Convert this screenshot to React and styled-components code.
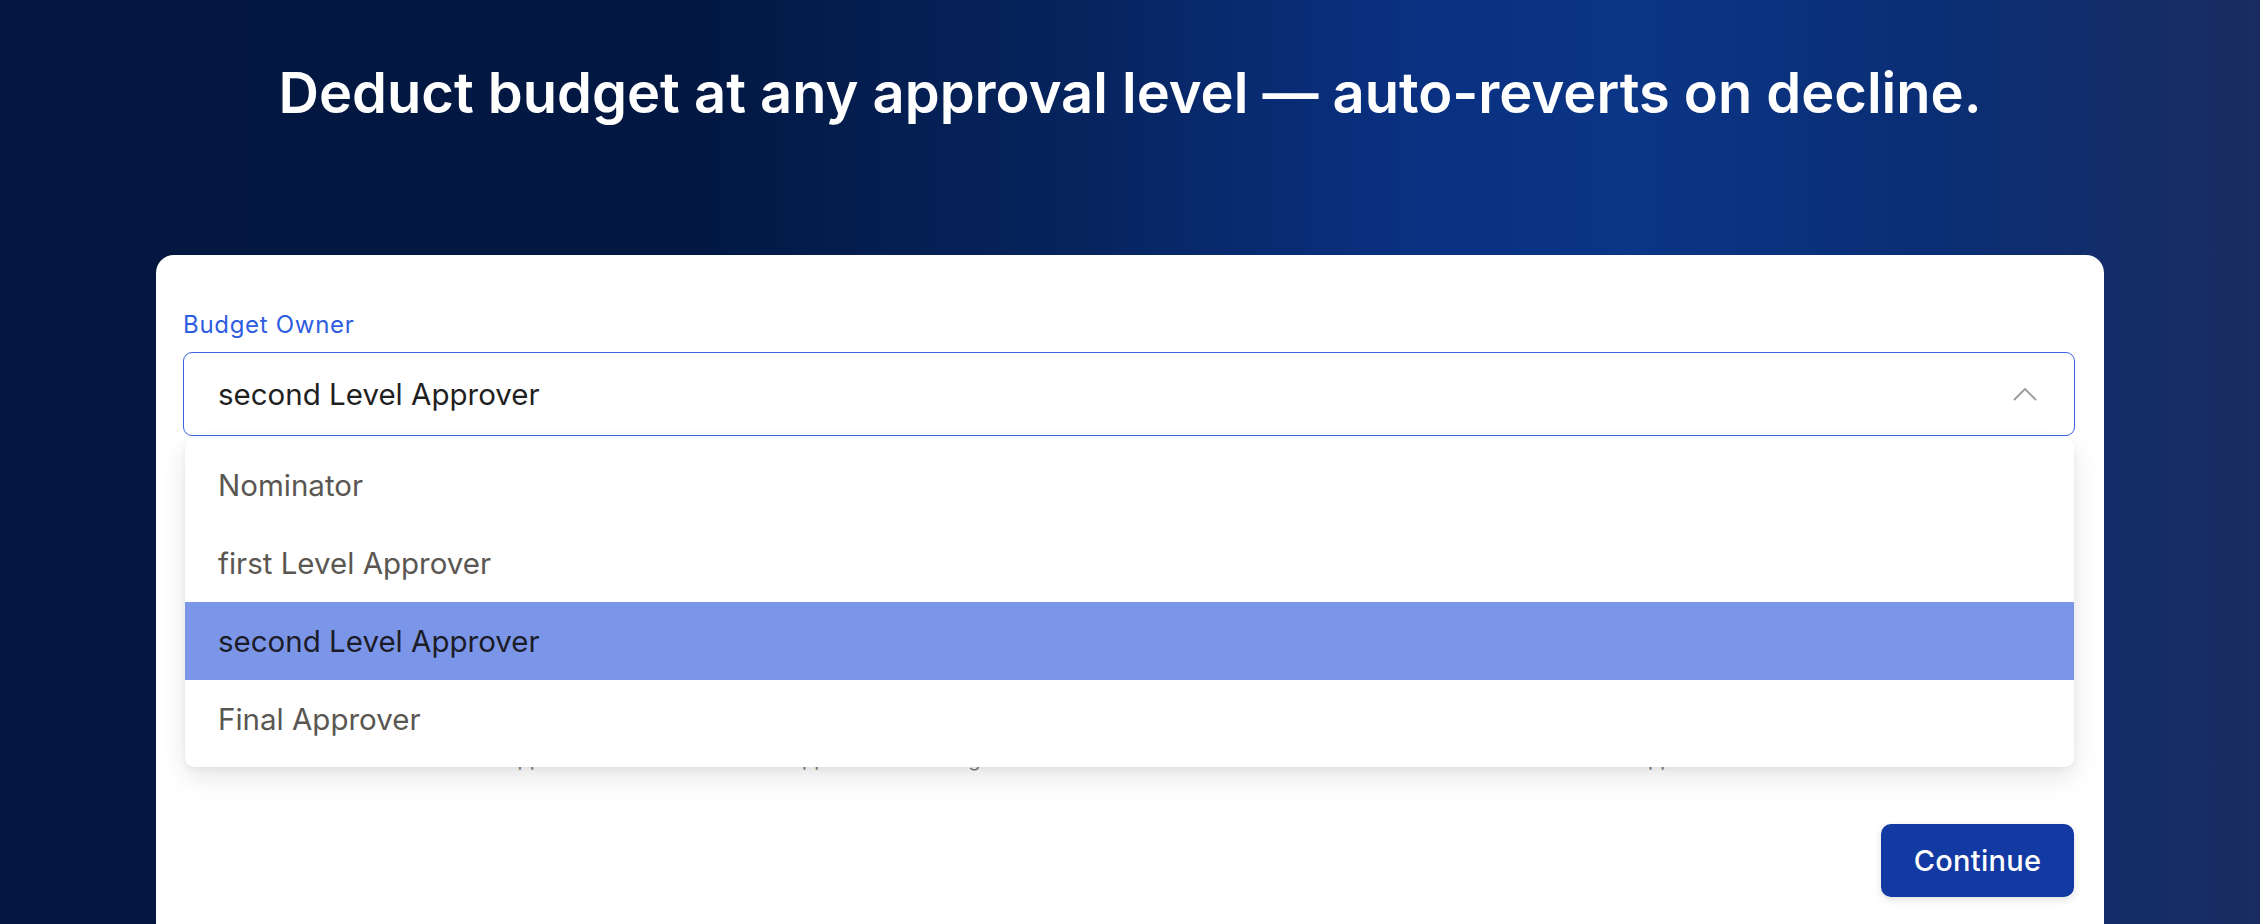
import React from "react";
import styled, { createGlobalStyle } from "styled-components";

const Global = createGlobalStyle`
  html, body { margin: 0; padding: 0; }
  body {
    font-family: Inter, "Noto Sans", "Liberation Sans", sans-serif;
    background: #041842;
  }
  * { box-sizing: border-box; }
`;

const Page = styled.div`
  width: 2260px;
  height: 924px;
  overflow: hidden;
  background: linear-gradient(
    90deg,
    #041740 0%,
    #021842 30%,
    #06245e 48%,
    #0a3080 62%,
    #0b3586 72%,
    #0a2e74 86%,
    #1a2c60 100%
  );
  display: flex;
  flex-direction: column;
  align-items: center;
`;

const Heading = styled.h1`
  margin: 60px 0 0;
  font-size: 56px;
  line-height: 67px;
  font-weight: 600;
  color: #ffffff;
  text-align: center;
`;

const Card = styled.div`
  margin-top: 128px;
  width: 1948px;
  flex: 1;
  background: #ffffff;
  border-radius: 18px 18px 0 0;
  padding: 54px 29px 0 27px;
  display: flex;
  flex-direction: column;
`;

const Label = styled.label`
  font-size: 24px;
  line-height: 32px;
  letter-spacing: 0.7px;
  color: #2f5ddf;
`;

const SelectWrap = styled.div`
  position: relative;
  margin-top: 11px;
`;

const SelectBox = styled.div`
  height: 84px;
  border: 1.5px solid #3b63e3;
  border-radius: 9px;
  display: flex;
  align-items: center;
  justify-content: space-between;
  padding: 0 37px 0 34px;
  font-size: 29.5px;
  color: #1f1f1f;
`;

const Menu = styled.ul`
  position: absolute;
  top: calc(100% + 2px);
  left: 2px;
  right: 1px;
  margin: 0;
  padding: 8px 0 9px;
  list-style: none;
  background: #ffffff;
  border-radius: 9px;
  box-shadow: 0 10px 26px rgba(0, 0, 0, 0.1), 0 2px 6px rgba(0, 0, 0, 0.05);
  z-index: 2;
`;

const Item = styled.li`
  height: 78px;
  display: flex;
  align-items: center;
  padding-left: 33px;
  font-size: 29.5px;
  color: ${(p) => (p.$active ? "#1c1c28" : "#5a5753")};
  background: ${(p) => (p.$active ? "#7b96e8" : "transparent")};
`;

const Helper = styled.p`
  margin: 309px 0 0;
  padding-left: 35px;
  font-size: 20px;
  line-height: 28px;
  color: #7a7a7a;
  white-space: nowrap;
`;

const Actions = styled.div`
  display: flex;
  justify-content: flex-end;
  margin-top: 51px;
`;

const Button = styled.button`
  width: 193px;
  height: 73px;
  border: none;
  border-radius: 10px;
  background: #1339a3;
  color: #ffffff;
  font-family: inherit;
  font-size: 29px;
  font-weight: 500;
  letter-spacing: 0.3px;
  box-shadow: 0 3px 8px rgba(0, 0, 0, 0.12);
  cursor: pointer;
  margin-right: 1px;
`;

const Chevron = () => (
  <svg width="24" height="14" viewBox="0 0 24 14" fill="none">
    <polyline
      points="1.5,12.5 12,2 22.5,12.5"
      stroke="#9b9b9b"
      strokeWidth="1.8"
      strokeLinecap="round"
      strokeLinejoin="round"
    />
  </svg>
);

const options = ["Nominator", "first Level Approver", "second Level Approver", "Final Approver"];

export default function App() {
  const selected = "second Level Approver";
  return (
    <>
      <Global />
      <Page>
        <Heading>Deduct budget at any approval level — auto-reverts on decline.</Heading>
        <Card>
          <Label>Budget Owner</Label>
          <SelectWrap>
            <SelectBox>
              <span>{selected}</span>
              <Chevron />
            </SelectBox>
            <Menu>
              {options.map((o) => (
                <Item key={o} $active={o === selected}>
                  {o}
                </Item>
              ))}
            </Menu>
          </SelectWrap>
          <Helper>
            Amount is deducted when the approver at the selected level approves their budget and is restored in full if the nomination is declined at a more senior approval level.
          </Helper>
          <Actions>
            <Button>Continue</Button>
          </Actions>
        </Card>
      </Page>
    </>
  );
}
